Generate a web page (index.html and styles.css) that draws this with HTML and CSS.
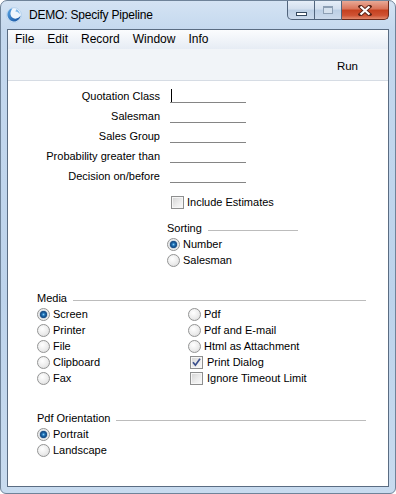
FILE: index.html
```html
<!DOCTYPE html>
<html lang="en">
<head>
    <meta charset="UTF-8">
    <title>DEMO: Specify Pipeline</title>
    <link rel="stylesheet" href="styles.css">
</head>
<body>

    <div class="window">
        <div class="titlebar">
            <svg class="app-icon" width="16" height="16" viewBox="0 0 16 16">
                <defs>
                    <linearGradient id="ig" x1="0" y1="0" x2="1" y2="1">
                        <stop offset="0" stop-color="#5aa6e6"/>
                        <stop offset="1" stop-color="#134f9c"/>
                    </linearGradient>
                </defs>
                <circle cx="8" cy="8" r="7.3" fill="#eef5fc" stroke="#9cc3e8" stroke-width="0.6"/>
                <path d="M6.5 1.2 C2.8 2 0.8 5.6 1.6 9.2 C2.4 12.8 6.2 15.2 10 14.2 C12.6 13.4 14.4 11.2 14.6 8.6 C13 11.4 9.6 12.4 7 11 C4.4 9.6 3.8 6.4 5 4 C5.4 3 5.9 2 6.5 1.2 Z" fill="url(#ig)"/>
                <path d="M10.2 2.2 C12.4 3 13.8 5 13.9 7.2 C12.8 5.6 11.2 4.6 9.4 4.4 C9.8 3.6 10.1 2.9 10.2 2.2 Z" fill="#7fb8ea"/>
            </svg>
            <span class="title">DEMO: Specify Pipeline</span>
            <div class="caption-buttons">
                <span class="cb cb-min"><span class="min-glyph"></span></span>
                <span class="cb cb-max"><span class="max-glyph"></span></span>
                <span class="cb cb-close">
                    <svg width="14" height="11" viewBox="0 0 14 11">
                        <path d="M2.5 1.5 L11.5 9.5 M11.5 1.5 L2.5 9.5" stroke="#5b2418" stroke-width="4" stroke-linecap="square"/>
                        <path d="M2.5 1.5 L11.5 9.5 M11.5 1.5 L2.5 9.5" stroke="#fff" stroke-width="2.2"/>
                    </svg>
                </span>
            </div>
        </div>

        <div class="client">
            <div class="menubar">
                <span>File</span>
                <span>Edit</span>
                <span>Record</span>
                <span>Window</span>
                <span>Info</span>
            </div>
            <div class="toolbar">
                <span class="run">Run</span>
            </div>

            <div class="content">
                <div class="fields">
                    <label>Quotation Class</label>
                    <span class="field"><span class="caret"></span></span>
                    <label>Salesman</label>
                    <span class="field"></span>
                    <label>Sales Group</label>
                    <span class="field"></span>
                    <label>Probability greater than</label>
                    <span class="field"></span>
                    <label>Decision on/before</label>
                    <span class="field"></span>
                </div>

                <div class="opt include"><span class="check"></span>Include Estimates</div>

                <div class="group sorting">
                    <div class="group-head"><span>Sorting</span><span class="rule"></span></div>
                    <div class="opt"><span class="radio on"></span>Number</div>
                    <div class="opt"><span class="radio"></span>Salesman</div>
                </div>

                <div class="group media">
                    <div class="group-head"><span>Media</span><span class="rule"></span></div>
                    <div class="cols">
                        <div class="col">
                            <div class="opt"><span class="radio on"></span>Screen</div>
                            <div class="opt"><span class="radio"></span>Printer</div>
                            <div class="opt"><span class="radio"></span>File</div>
                            <div class="opt"><span class="radio"></span>Clipboard</div>
                            <div class="opt"><span class="radio"></span>Fax</div>
                        </div>
                        <div class="col">
                            <div class="opt"><span class="radio"></span>Pdf</div>
                            <div class="opt"><span class="radio"></span>Pdf and E-mail</div>
                            <div class="opt"><span class="radio"></span>Html as Attachment</div>
                            <div class="opt boxed">
                                <span class="check">
                                    <svg width="11" height="11" viewBox="0 0 11 11">
                                        <path d="M2 5.2 L4.4 8.2 L9 1.8" fill="none" stroke="#3a4f8c" stroke-width="1.7"/>
                                    </svg>
                                </span>Print Dialog
                            </div>
                            <div class="opt boxed"><span class="check"></span>Ignore Timeout Limit</div>
                        </div>
                    </div>
                </div>

                <div class="group orient">
                    <div class="group-head"><span>Pdf Orientation</span><span class="rule"></span></div>
                    <div class="opt"><span class="radio on"></span>Portrait</div>
                    <div class="opt"><span class="radio"></span>Landscape</div>
                </div>
            </div>
        </div>
    </div>

</body>
</html>
```

FILE: styles.css
```css
body {
    margin: 0;
    padding: 0;
    background-color: #fff;
    font-family: "Liberation Sans", Arial, sans-serif;
    font-size: 11px;
    color: #000;
}

.window {
    width: 396px;
    height: 494px;
    box-sizing: border-box;
    display: flex;
    flex-direction: column;
    border: 1px solid #6f8399;
    border-radius: 7px 7px 6px 6px;
    background: linear-gradient(to bottom, #d4e3f3 0, #c4d8ee 30px, #bdd3eb 60%, #c8dbef 100%);
}

/* title bar */

.titlebar {
    height: 28px;
    display: flex;
    align-items: flex-start;
    padding-left: 5px;
}

.app-icon {
    margin-top: 6px;
}

.title {
    margin-left: 7px;
    margin-top: 6px;
    line-height: 16px;
    font-size: 12px;
    letter-spacing: -0.2px;
    color: #000;
}

.caption-buttons {
    margin-left: auto;
    margin-right: 6px;
    display: flex;
}

.cb {
    height: 19px;
    box-sizing: border-box;
    display: flex;
    align-items: center;
    justify-content: center;
    border: 1px solid #51647c;
    border-top: none;
    background: linear-gradient(to bottom, #e6eef8 0, #d3dfee 45%, #bccfe5 50%, #cbdaec 100%);
}

.cb-min {
    width: 28px;
    border-radius: 0 0 0 5px;
}

.cb-max {
    width: 27px;
    border-left: none;
}

.cb-close {
    width: 47px;
    border-left: none;
    border-radius: 0 0 5px 0;
    border-color: #6b2a1c;
    background: linear-gradient(to bottom, #e9a996 0, #d97258 45%, #c5401f 50%, #cf5233 80%, #e28a6e 100%);
}

.min-glyph {
    width: 9px;
    height: 2px;
    margin-top: 7px;
    background-color: #fff;
    border: 1px solid #35495f;
}

.max-glyph {
    width: 8px;
    height: 5px;
    margin-top: -1px;
    background-color: #d5e1ee;
    border: 1px solid #8d9fb4;
    border-top-width: 2px;
}

/* client area */

.client {
    flex: 1;
    margin: 0 6px 6px 6px;
    border: 1px solid #5a6c82;
    background-color: #fff;
    display: flex;
    flex-direction: column;
}

.menubar {
    height: 19px;
    display: flex;
    gap: 13px;
    padding-left: 7px;
    line-height: 19px;
    font-size: 12px;
    background: linear-gradient(to bottom, #fbfcfe, #e6ecf4);
}

.toolbar {
    height: 32px;
    box-sizing: border-box;
    display: flex;
    justify-content: flex-end;
    align-items: flex-start;
    padding-top: 9px;
    padding-right: 30px;
    background-color: #f1f4f8;
    border-bottom: 1px solid #d6dce4;
}

.run {
    line-height: 16px;
    font-size: 11.5px;
}

.content {
    flex: 1;
    padding-top: 5px;
}

/* search fields */

.fields {
    display: grid;
    grid-template-columns: 152px 76px;
    grid-auto-rows: 20px;
    column-gap: 10px;
}

.fields label {
    text-align: right;
    line-height: 20px;
}

.field {
    height: 13px;
    margin-top: 3px;
    border-bottom: 1px solid #858585;
}

.caret {
    display: block;
    width: 1px;
    height: 13px;
    margin-left: 1px;
    background-color: #000;
}

/* options */

.opt {
    display: flex;
    align-items: center;
    gap: 3px;
    height: 16px;
}

.radio {
    width: 13px;
    height: 13px;
    box-sizing: border-box;
    border-radius: 50%;
    border: 1px solid #939494;
    background: radial-gradient(circle at 40% 35%, #ffffff 0, #ececec 55%, #d6d6d6 100%);
}

.radio.on {
    background: radial-gradient(circle at 50% 50%, #8fcdf2 0, #2a7fc2 1.2px, #124e8c 2.6px, #24578b 3.4px, #c9d3dd 4px, #ebebeb 4.6px, #f7f7f7 100%);
}

.check {
    width: 13px;
    height: 13px;
    box-sizing: border-box;
    display: flex;
    align-items: center;
    justify-content: center;
    border: 1px solid #8e8f8f;
    background: linear-gradient(135deg, #d2d2d2 0, #ececec 55%, #fbfbfb 100%);
    box-shadow: inset 0 0 0 1px #f6f6f6;
}

.include {
    margin-top: 6px;
    margin-left: 163px;
    height: 20px;
}

.group-head {
    display: flex;
    align-items: flex-start;
    line-height: 16px;
}

.rule {
    flex: 1;
    height: 1px;
    margin-top: 10px;
    margin-left: 6px;
    background-color: #bcbcbc;
}

.sorting {
    width: 131px;
    margin-top: 8px;
    margin-left: 159px;
}

.media {
    width: 329px;
    margin-top: 22px;
    margin-left: 29px;
}

.orient {
    width: 329px;
    margin-top: 24px;
    margin-left: 29px;
}

.cols {
    display: flex;
}

.col {
    display: flex;
    flex-direction: column;
}

.col:first-child {
    width: 151px;
}

.opt.boxed {
    margin-left: 2px;
    gap: 4px;
}
```
